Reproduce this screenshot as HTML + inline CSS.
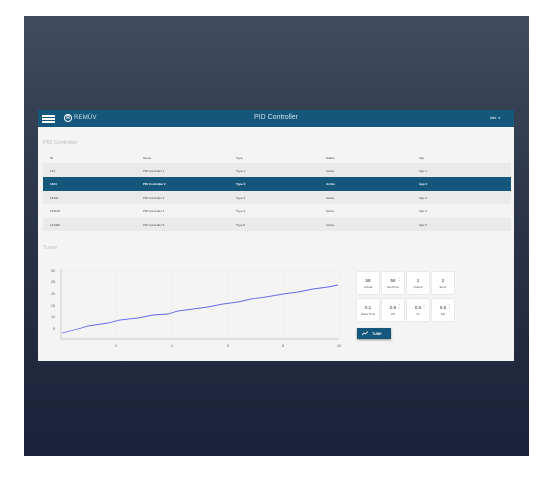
<!DOCTYPE html>
<html><head><style>
*{margin:0;padding:0;box-sizing:border-box}
body{width:552px;height:491px;background:#fff;position:relative;overflow:hidden;font-family:"Liberation Sans",sans-serif}
.panel{position:absolute;left:24px;top:16px;width:505px;height:440px;background:linear-gradient(#414c5e,#2b3448 45%,#1b2239)}
.app{position:absolute;left:38px;top:110px;width:476px;height:251px;background:#f4f4f4}
.hdr{position:absolute;left:0;top:0;width:476px;height:17px;background:#14577a}
.a{position:absolute;white-space:nowrap}
.t{font-size:3px;color:#444}
.row{position:absolute;left:5px;width:468px;height:13.5px}
.card{position:absolute;width:22px;height:22px;background:#fff;box-shadow:0 0 1px rgba(0,0,0,.25);text-align:center}
.card .v{position:absolute;top:6px;width:100%;font-size:4.5px;color:#333}
.card .l{position:absolute;top:13px;width:100%;font-size:3px;color:#555}
.ar{position:absolute;right:4px;top:5px;font-size:3px;color:#888;line-height:3px}
</style></head><body>
<div class="panel"></div>
<div class="app">
 <div class="hdr">
  <div class="a" style="left:4px;top:5px;width:13px;height:2px;background:#fff;box-shadow:0 3px 0 #fff,0 6px 0 #fff"></div>
  <div class="a" style="left:26px;top:4px;width:8px;height:8px;border:1.2px solid #fff;border-radius:50%;font-size:5px;color:#fff;text-align:center;line-height:6px;font-weight:bold">R</div>
  <div class="a" style="left:36px;top:5px;font-size:6px;color:#cfe0ea;letter-spacing:.2px">REMÜV</div>
  <div class="a" style="left:0;width:476px;text-align:center;top:4px;font-size:7px;color:#cfe0ea">PID Controller</div>
  <div class="a" style="left:452px;top:6px;font-size:3.5px;color:#fff">alex &nbsp;▾</div>
 </div>
 <div class="a" style="left:5px;top:30px;font-size:5.5px;color:#bbb">PID Controller</div>
 <div class="row" style="top:41px"></div>
 <div class="row" style="top:53px;background:#eaeaea"></div>
 <div class="row" style="top:67px;background:#14577a"></div>
 <div class="row" style="top:80.5px;background:#eaeaea"></div>
 <div class="row" style="top:107.5px;background:#eaeaea"></div>
 <div class="a t" style="left:12px;top:46px">ID</div><div class="a t" style="left:105px;top:46px">Name</div><div class="a t" style="left:198px;top:46px">Type</div><div class="a t" style="left:288px;top:46px">Status</div><div class="a t" style="left:381px;top:46px">App</div>
 <div class="a t" style="left:12px;top:59px">123</div><div class="a t" style="left:105px;top:59px">PID Controller 1</div><div class="a t" style="left:198px;top:59px">Type 1</div><div class="a t" style="left:288px;top:59px">Active</div><div class="a t" style="left:381px;top:59px">App 1</div>
 <div class="a t" style="left:12px;top:72px;color:#fff;font-weight:bold">1234</div><div class="a t" style="left:105px;top:72px;color:#fff;font-weight:bold">PID Controller 2</div><div class="a t" style="left:198px;top:72px;color:#fff;font-weight:bold">Type 2</div><div class="a t" style="left:288px;top:72px;color:#fff;font-weight:bold">Active</div><div class="a t" style="left:381px;top:72px;color:#fff;font-weight:bold">App 2</div>
 <div class="a t" style="left:12px;top:86px">12332</div><div class="a t" style="left:105px;top:86px">PID Controller 3</div><div class="a t" style="left:198px;top:86px">Type 3</div><div class="a t" style="left:288px;top:86px">Active</div><div class="a t" style="left:381px;top:86px">App 3</div>
 <div class="a t" style="left:12px;top:99px">123126</div><div class="a t" style="left:105px;top:99px">PID Controller 4</div><div class="a t" style="left:198px;top:99px">Type 4</div><div class="a t" style="left:288px;top:99px">Active</div><div class="a t" style="left:381px;top:99px">App 4</div>
 <div class="a t" style="left:12px;top:113px">123400</div><div class="a t" style="left:105px;top:113px">PID Controller 5</div><div class="a t" style="left:198px;top:113px">Type 5</div><div class="a t" style="left:288px;top:113px">Active</div><div class="a t" style="left:381px;top:113px">App 5</div>
 <div class="a" style="left:5px;top:135px;font-size:5.5px;color:#bbb">Tuner</div>
 <svg class="a" style="left:0;top:150px" width="310" height="90" font-family="Liberation Sans" font-size="3.5" fill="#555">
  <g stroke="#e6e6e6" stroke-width=".4"><line x1="78" y1="10" x2="78" y2="78"/><line x1="134" y1="10" x2="134" y2="78"/><line x1="190" y1="10" x2="190" y2="78"/><line x1="245" y1="10" x2="245" y2="78"/><line x1="301" y1="10" x2="301" y2="78"/><line x1="23" y1="10" x2="301" y2="10"/></g>
  <line x1="23" y1="9" x2="23" y2="79" stroke="#bbb" stroke-width=".7"/>
  <line x1="23" y1="79" x2="301" y2="79" stroke="#bbb" stroke-width=".7"/>
  <text x="13" y="12">30</text><text x="13" y="23">25</text><text x="13" y="35">20</text><text x="13" y="47">15</text><text x="13" y="58">10</text><text x="15" y="70">5</text>
  <text x="77" y="87">2</text><text x="133" y="87">4</text><text x="189" y="87">6</text><text x="244" y="87">8</text><text x="299" y="87">10</text>
  <polyline fill="none" stroke="#6a6aee" stroke-width=".9" points="24,73 40,69 50,66 70,63 82,60 100,58 115,55 130,54 140,51 155,49 170,47 185,44 200,42 213,39 228,37 245,34 260,32 275,29 290,27 300,25"/>
 </svg>
 <div class="card" style="left:319px;top:162px"><div class="v">58</div><div class="l">Actual</div></div>
 <div class="card" style="left:344px;top:162px"><div class="v">58</div><div class="l">Set Point</div><div class="ar">˄<br>˅</div></div>
 <div class="card" style="left:369px;top:162px"><div class="v">1</div><div class="l">Output</div></div>
 <div class="card" style="left:394px;top:162px"><div class="v">2</div><div class="l">Error</div></div>
 <div class="card" style="left:319px;top:189px"><div class="v">0.1</div><div class="l">Delta Time</div></div>
 <div class="card" style="left:344px;top:189px"><div class="v">0.8</div><div class="l">KP</div><div class="ar">˄<br>˅</div></div>
 <div class="card" style="left:369px;top:189px"><div class="v">0.5</div><div class="l">KI</div><div class="ar">˄<br>˅</div></div>
 <div class="card" style="left:394px;top:189px"><div class="v">0.5</div><div class="l">KD</div><div class="ar">˄<br>˅</div></div>
 <div class="a" style="left:319px;top:218px;width:34px;height:11px;background:#14577a;box-shadow:0 1px 2px rgba(0,0,0,.4)">
  <svg class="a" style="left:5px;top:3px" width="6" height="5"><polyline points="0,4 2,2 3.5,3 6,0.5" fill="none" stroke="#fff" stroke-width=".8"/></svg>
  <div class="a" style="left:15px;top:3.5px;font-size:3.5px;color:#fff;font-weight:bold">TUNE</div>
 </div>
</div>
</body></html>
